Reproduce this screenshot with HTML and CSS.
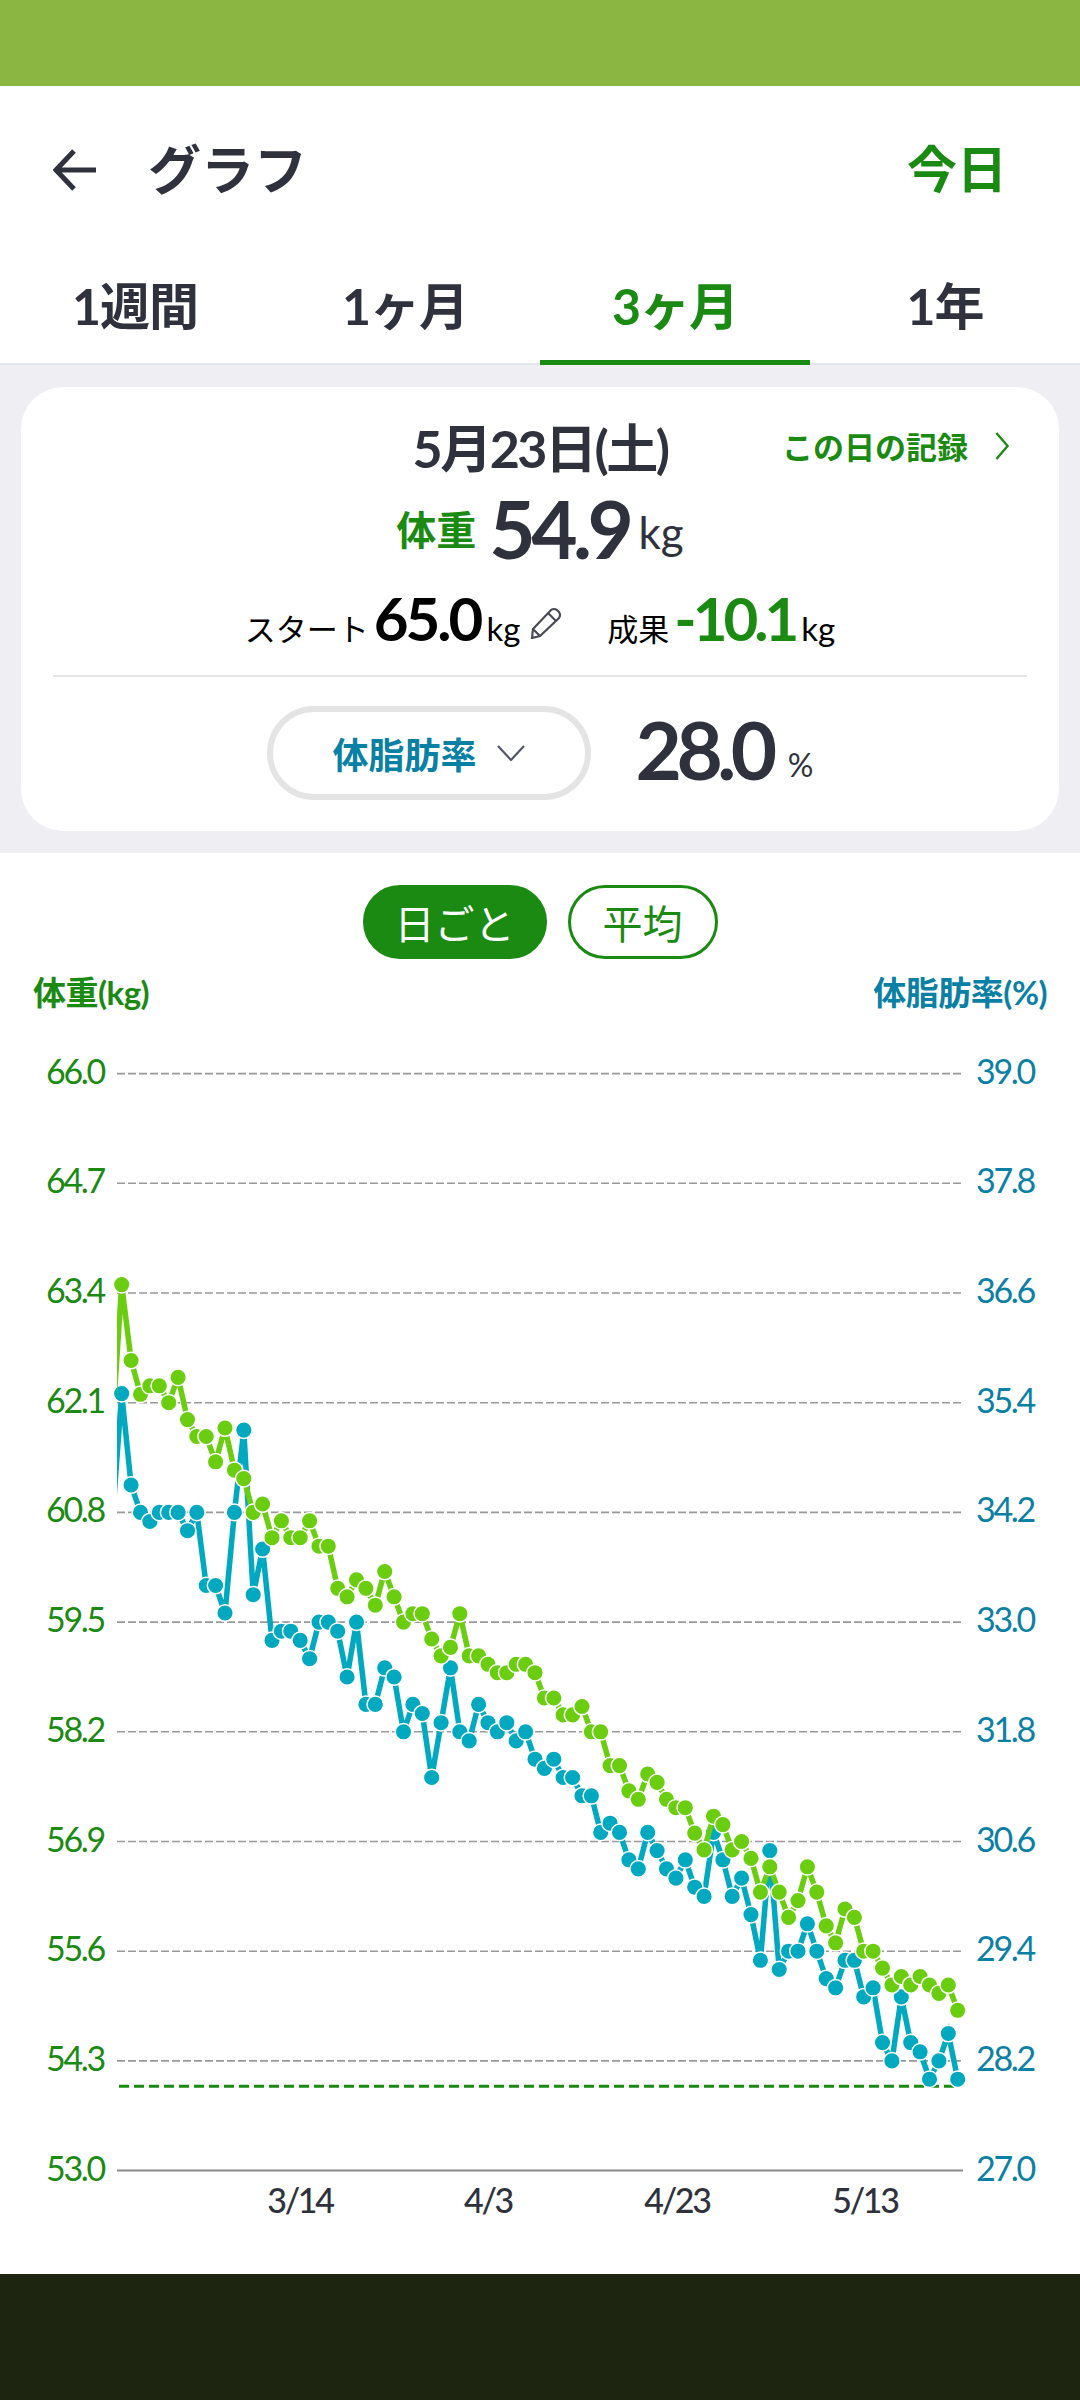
FILE: index.html
```html
<!DOCTYPE html>
<html lang="ja">
<head>
  <meta charset="UTF-8" />
  <meta name="viewport" content="width=device-width, initial-scale=1.0"/>
  <title>グラフ</title>
  <link rel="stylesheet" href="styles.css">
</head>
<body>

  <div class="status-bar"></div>

  <header class="toolbar">
    <svg class="back-icon" viewBox="0 0 44 42" width="44" height="42">
      <path d="M21 2 L3 21 L21 40 M3 21 H43" />
    </svg>
    <h1 class="page-title">グラフ</h1>
    <a class="today-link">今日</a>
  </header>

  <nav class="tabs">
    <a class="tab">1週間</a>
    <a class="tab">1ヶ月</a>
    <a class="tab active">3ヶ月</a>
    <a class="tab">1年</a>
  </nav>

  <section class="summary">
    <div class="card">
      <div class="date-row">
        <span></span>
        <span class="date">5月23日(土)</span>
        <a class="day-link">この日の記録
          <svg class="chevron" viewBox="0 0 16 30" width="16" height="28">
            <path d="M2 1 L14 15 L2 29" />
          </svg>
        </a>
      </div>

      <div class="weight-row">
        <span class="weight-label">体重</span>
        <span class="big-num">54.9</span>
        <span class="big-unit">kg</span>
      </div>

      <div class="goal-row">
        <span class="goal-label">スタート</span>
        <span class="mid-num">65.0</span>
        <span class="goal-unit">kg</span>
        <svg class="pencil" viewBox="0 0 32 32" width="32" height="32">
          <path d="M3 22 L21 3 Q24 1 27 3 L29 5 Q31 8 29 11 L10 29 L2 31 Z M18 6 L26 14 M3 22 L10 29" />
        </svg>
        <span class="goal-label result-label">成果</span>
        <span class="mid-num result-num">-10.1</span>
        <span class="goal-unit result-unit">kg</span>
      </div>

      <div class="fat-row">
        <button class="fat-select">体脂肪率
          <svg class="select-arrow" viewBox="0 0 28 16" width="28" height="16">
            <path d="M1 1 L14 15 L27 1" />
          </svg>
        </button>
        <span class="big-num fat-num">28.0</span>
        <span class="fat-unit">%</span>
      </div>
    </div>
  </section>

  <section class="chart-area">
    <div class="toggle">
      <button class="toggle-btn on">日ごと</button>
      <button class="toggle-btn">平均</button>
    </div>
    <div class="axis-titles">
      <span class="axis-title kg">体重(kg)</span>
      <span class="axis-title fat">体脂肪率(%)</span>
    </div>
    <svg id="chart" class="chart" width="1080" height="1244" viewBox="0 0 1080 1244"></svg>
  </section>

  <div class="bottom-bar"></div>

  <script src="chart.js"></script>
</body>
</html>
```

FILE: styles.css
```css
* { box-sizing: border-box; margin: 0; padding: 0; }
body {
  width: 1080px;
  height: 2400px;
  display: flex;
  flex-direction: column;
  background: #fff;
  color: #2f323c;
  font-family: Lato, 'Noto Sans CJK JP', sans-serif;
  overflow: hidden;
}

.status-bar { height: 86px; background: #8bb642; }

/* toolbar */
.toolbar { height: 168px; display: flex; align-items: center; padding: 0 73px 0 53px; }
.back-icon { fill: none; stroke: #2f323c; stroke-width: 5; }
.page-title { margin-left: 51px; font-size: 53px; font-weight: 700; line-height: 1; }
.today-link { margin: -2px 0 0 auto; font-size: 50px; font-weight: 700; line-height: 1; color: #1a8a12; }

/* tabs */
.tabs { height: 112px; display: grid; grid-template-columns: repeat(4, 270px); border-bottom: 2px solid #e4e6ed; }
.tab { display: flex; justify-content: center; padding-top: 21px; font-size: 50px; font-weight: 700; line-height: 64px; letter-spacing: -1px; border-bottom: 5px solid transparent; margin-bottom: -2px; }
.tab.active { color: #1a8a12; border-bottom-color: #1a8a12; }

/* summary card */
.summary { background: #eeeef3; padding: 22px 21px; }
.card { height: 444px; padding: 21px 32px 0; background: #fff; border-radius: 42px; }

.date-row { display: grid; grid-template-columns: 1fr auto 1fr; align-items: center; height: 58px; margin: 0 17px 2px; }
.date { font-size: 52px; font-weight: 700; letter-spacing: -2.5px; }
.day-link { justify-self: end; display: flex; align-items: center; gap: 26px; font-size: 31px; font-weight: 700; color: #1a8a12; white-space: nowrap; }
.chevron { fill: none; stroke: #1a8a12; stroke-width: 2.5; }

.weight-row, .goal-row, .fat-row { display: flex; justify-content: center; }
.weight-row { height: 104px; padding-top: 16px; align-items: center; }
.weight-label { font-size: 40px; font-weight: 700; color: #1a8a12; }
.big-num { margin-left: 13px; font-size: 80px; font-weight: 700; line-height: 94px; letter-spacing: -4.5px; }
.big-unit { margin-left: 9px; margin-top: 8px; font-size: 44px; font-weight: 400; }

.goal-row { height: 72px; padding-top: 8px; align-items: baseline; color: #000; }
.goal-label { font-size: 31px; }
.mid-num { margin-left: 5px; font-size: 60px; font-weight: 700; line-height: 76px; letter-spacing: -3px; }
.goal-unit { margin-left: 6px; font-size: 33px; }
.pencil { margin: 27px 0 0 10px; align-self: flex-start; fill: none; stroke: #4a4c55; stroke-width: 2.2; }
.result-label { margin-left: 45px; }
.result-num { color: #1a8a12; letter-spacing: -4px; }

.fat-row { align-items: center; margin-top: 31px; padding-top: 29px; border-top: 2px solid #e6e6e6; }
.fat-select { width: 324px; height: 94px; display: flex; align-items: center; justify-content: center; gap: 20px; background: #fff; border: 6px solid #e4e4e4; border-radius: 47px; font-family: inherit; font-size: 36px; font-weight: 700; color: #0a80a5; }
.select-arrow { fill: none; stroke: #54566a; stroke-width: 2.2; }
.fat-num { margin: -8px 0 0 45px; letter-spacing: -5.5px; }
.fat-unit { margin-left: 16px; margin-top: 22px; font-size: 32px; font-weight: 400; }

/* chart */
.chart-area { flex: 1; display: flex; flex-direction: column; }
.toggle { display: flex; justify-content: center; gap: 21px; margin: 32px 0 0; }
.toggle-btn { height: 74px; padding: 0 32px; background: #fff; border: 3px solid #1a8a12; border-radius: 37px; font-family: inherit; font-size: 40px; color: #1a8a12; }
.toggle-btn.on { padding: 0 29px; background: #1a8a12; color: #fff; }
.axis-titles { display: flex; justify-content: space-between; margin-top: 10px; padding: 0 33px; height: 61px; }
.axis-title { font-size: 33px; font-weight: 700; line-height: 46px; letter-spacing: -.5px; }
.axis-title.kg { color: #1a8a12; }
.axis-title.fat { color: #0a80a5; }
.chart { display: block; }

.grid-line { stroke: #999; stroke-width: 1.6; stroke-dasharray: 8 3; }
.base-line { stroke: #8a8a8a; stroke-width: 2; }
.goal-line { stroke: #1a8a12; stroke-width: 3; stroke-dasharray: 10 5; }
.series { fill: none; stroke-width: 5.5; stroke-linejoin: miter; }
.dot { stroke: #fff; stroke-width: 1.5; }
.series.fat { stroke: #00a9bf; }
.dot.fat { fill: #00a9bf; }
.series.kg { stroke: #6bcd10; }
.dot.kg { fill: #6bcd10; }
.tick { font-family: Lato, sans-serif; font-size: 34px; letter-spacing: -2.3px; }
.tick.kg { fill: #1a8a12; text-anchor: end; }
.tick.fat { fill: #0a80a5; }
.tick.date-tick { fill: #2f323c; font-weight: 500; text-anchor: middle; }

.bottom-bar { height: 126px; background: #1d2510; }
```

FILE: chart.js
```js
const weights = [63.5,62.6,62.2,62.3,62.3,62.1,62.4,61.9,61.7,61.7,61.4,61.8,61.3,61.2,60.8,60.9,60.5,60.7,60.5,60.5,
  60.7,60.4,60.4,59.9,59.8,60.0,59.9,59.7,60.1,59.8,59.5,59.6,59.6,59.3,59.1,59.2,59.6,59.1,59.1,59.0,
  58.9,58.9,59.0,59.0,58.9,58.6,58.6,58.4,58.4,58.5,58.2,58.2,57.8,57.8,57.5,57.4,57.7,57.6,57.4,57.3,
  57.3,57.0,56.8,57.2,57.1,56.8,56.9,56.7,56.3,56.6,56.3,56.0,56.2,56.6,56.3,55.9,55.7,56.1,56.0,55.6,
  55.6,55.4,55.2,55.3,55.2,55.3,55.2,55.1,55.2,54.9];

const fats = [35.5,34.5,34.2,34.1,34.2,34.2,34.2,34.0,34.2,33.4,33.4,33.1,34.2,35.1,33.3,33.8,32.8,32.9,32.9,32.8,
  32.6,33.0,33.0,32.9,32.4,33.0,32.1,32.1,32.5,32.4,31.8,32.1,32.0,31.3,31.9,32.5,31.8,31.7,32.1,31.9,
  31.8,31.9,31.7,31.8,31.5,31.4,31.5,31.3,31.3,31.1,31.1,30.7,30.8,30.7,30.4,30.3,30.7,30.5,30.3,30.2,
  30.4,30.1,30.0,30.7,30.4,30.0,30.2,29.8,29.3,30.5,29.2,29.4,29.4,29.7,29.4,29.1,29.0,29.3,29.3,28.9,
  29.0,28.4,28.2,28.9,28.4,28.3,28.0,28.2,28.5,28.0];

// values just before the visible range, the line runs in from the left edge
const prevWeight = 61.8;
const prevFat = 34.1;

const TOP = 43.6, STEP = 109.7, LEFT = 117, RIGHT = 963;
const X0 = 121.7, DX = 9.393;
const GOAL = 54.0;

const kgLabels = ['66.0','64.7','63.4','62.1','60.8','59.5','58.2','56.9','55.6','54.3','53.0'];
const fatLabels = ['39.0','37.8','36.6','35.4','34.2','33.0','31.8','30.6','29.4','28.2','27.0'];
const dateLabels = [['3/14', 300], ['4/3', 488], ['4/23', 677], ['5/13', 865]];

const svg = document.getElementById('chart');
const yKg = v => TOP + (66 - v) * STEP / 1.3;
const yFat = v => TOP + (39 - v) * STEP / 1.2;
const xAt = i => X0 + DX * i;

function add(tag, attrs, text) {
  const el = document.createElementNS('http://www.w3.org/2000/svg', tag);
  Object.keys(attrs).forEach(k => el.setAttribute(k, attrs[k]));
  if (text) el.textContent = text;
  svg.appendChild(el);
  return el;
}

function drawSeries(values, prev, yFn, name) {
  const pts = [[xAt(-1), yFn(prev)]].concat(values.map((v, i) => [xAt(i), yFn(v)]));
  add('polyline', {
    class: 'series ' + name,
    points: pts.map(p => p[0].toFixed(1) + ',' + p[1].toFixed(1)).join(' '),
    'clip-path': 'url(#plot)'
  });
  values.forEach((v, i) => {
    add('circle', { class: 'dot ' + name, cx: xAt(i).toFixed(1), cy: yFn(v).toFixed(1), r: 8.3 });
  });
}

const defs = add('defs', {});
defs.innerHTML = '<clipPath id="plot"><rect x="' + LEFT + '" y="0" width="' + (RIGHT - LEFT) + '" height="1244"></rect></clipPath>';

kgLabels.forEach((label, i) => {
  const y = TOP + STEP * i;
  add('line', { class: i === 10 ? 'base-line' : 'grid-line', x1: LEFT, x2: RIGHT, y1: y, y2: y });
  add('text', { class: 'tick kg', x: 104, y: y + 10 }, label);
  add('text', { class: 'tick fat', x: 976, y: y + 10 }, fatLabels[i]);
});

dateLabels.forEach(d => {
  add('text', { class: 'tick date-tick', x: d[1], y: TOP + STEP * 10 + 42 }, d[0]);
});

add('line', { class: 'goal-line', x1: 119, x2: 957, y1: yKg(GOAL), y2: yKg(GOAL) });

drawSeries(fats, prevFat, yFat, 'fat');
drawSeries(weights, prevWeight, yKg, 'kg');
```
